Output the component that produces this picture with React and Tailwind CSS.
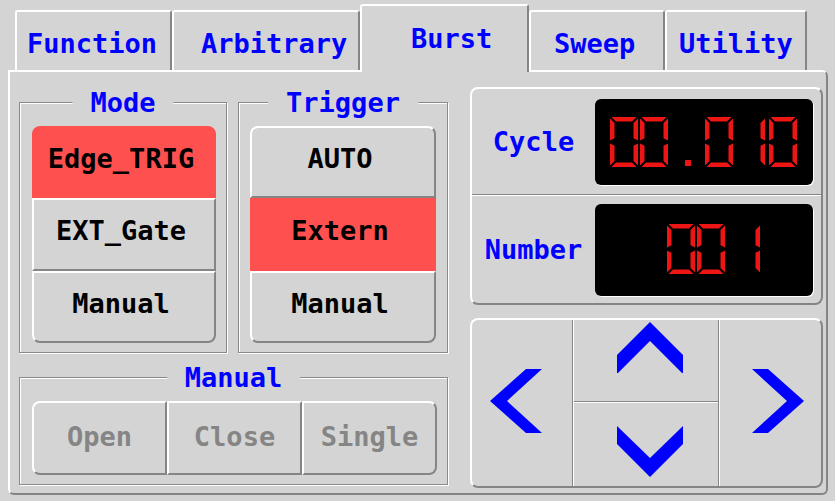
import React from "react";

const FONT = "font-['DejaVu_Sans_Mono',monospace] font-bold";
const RAISED =
  "border-2 border-t-white border-l-white border-r-[#858585] border-b-[#858585]";

const tabs = [
  { label: "Function", cls: "w-[157px] pl-[10px]" },
  { label: "Arbitrary", cls: "w-[188px] pl-[27px]" },
  { label: "Burst", cls: "w-[169px] pl-[49px]", active: true },
  { label: "Sweep", cls: "w-[136px] pl-[23px]" },
  { label: "Utility", cls: "w-[142px] pl-[12px]" },
];

const SEG_RED = "#ee1515";

// simple 7-segment digit, drawn as polygons
function segPolys(x, y, w = 28, h = 50, t = 4.5) {
  const m = h / 2;
  const g = 1.5;
  return {
    a: [[x + g, y], [x + w - g, y], [x + w - g - t, y + t], [x + g + t, y + t]],
    d: [[x + g, y + h], [x + w - g, y + h], [x + w - g - t, y + h - t], [x + g + t, y + h - t]],
    f: [[x, y + g], [x + t, y + g + t], [x + t, y + m - g - t / 2], [x, y + m - g]],
    e: [[x, y + m + g], [x + t, y + m + g + t / 2], [x + t, y + h - g - t], [x, y + h - g]],
    b: [[x + w, y + g], [x + w - t, y + g + t], [x + w - t, y + m - g - t / 2], [x + w, y + m - g]],
    c: [[x + w, y + m + g], [x + w - t, y + m + g + t / 2], [x + w - t, y + h - g - t], [x + w, y + h - g]],
  };
}

const DIGIT_SEGS = { 0: "abcdef", 1: "bc" };

function Digit({ x, y, d }) {
  const polys = segPolys(x, y);
  return (
    <>
      {DIGIT_SEGS[d].split("").map((s) => (
        <polygon key={s} points={polys[s].map((p) => p.join(",")).join(" ")} fill={SEG_RED} />
      ))}
    </>
  );
}

function GroupBox({ title, className, children }) {
  return (
    <div
      className={`relative border border-[#8a8a8a] shadow-[inset_1px_1px_0_#fff,1px_1px_0_#fff] ${className}`}
    >
      <div className="absolute left-1/2 top-[-14px] -translate-x-1/2 bg-[#d4d4d4] px-[18px] text-[27px] leading-none text-[#0000ff] whitespace-nowrap">
        {title}
      </div>
      {children}
    </div>
  );
}

function VButtons({ items, selected }) {
  return (
    <div className="flex h-full flex-col">
      {items.map((it, i) => {
        const sel = i === selected;
        const round = i === 0 ? "rounded-t-[8px]" : i === items.length - 1 ? "rounded-b-[8px]" : "";
        return (
          <div
            key={it}
            className={`flex flex-1 items-center justify-center pb-[7px] pr-[6px] text-[27px] leading-none text-black ${round} ${
              sel ? "border-2 border-[#ff5050] bg-[#ff5050]" : RAISED
            }`}
          >
            {it}
          </div>
        );
      })}
    </div>
  );
}

export default function App() {
  return (
    <div className={`h-[501px] w-[835px] overflow-hidden bg-[#d4d4d4] pt-[4px] ${FONT}`}>
      {/* tabs */}
      <div className="relative z-10 -mb-[2px] ml-[15px] flex h-[68px] items-end">
        {tabs.map((t) => (
          <div
            key={t.label}
            className={`flex items-center border-t-2 border-l-2 border-r-2 border-t-white border-l-white border-r-[#858585] bg-[#d4d4d4] text-[27px] leading-none text-[#0000ff] rounded-t-[3px] ${t.cls} ${
              t.active ? "h-[68px] pb-[2px]" : "mb-[2px] h-[60px] pt-[5px]"
            }`}
          >
            {t.label}
          </div>
        ))}
      </div>

      {/* panel */}
      <div className={`mx-[8px] flex h-[425px] w-[820px] rounded-[6px] rounded-tl-none ${RAISED}`}>
        {/* left column */}
        <div className="ml-[9px] mt-[30px] flex w-[429px] flex-col">
          <div className="flex h-[251px] gap-[11px]">
            <GroupBox title="Mode" className="w-[208px] pb-[9px] pl-[12px] pr-[10px] pt-[23px]">
              <VButtons items={["Edge_TRIG", "EXT_Gate", "Manual"]} selected={0} />
            </GroupBox>
            <GroupBox title="Trigger" className="w-[210px] pb-[9px] pl-[11px] pr-[11px] pt-[23px]">
              <VButtons items={["AUTO", "Extern", "Manual"]} selected={1} />
            </GroupBox>
          </div>
          <GroupBox title="Manual" className="mt-[24px] h-[108px] pb-[9px] pl-[12px] pr-[10px] pt-[23px]">
            <div className="flex h-full">
              {["Open", "Close", "Single"].map((b, i) => (
                <div
                  key={b}
                  className={`flex flex-1 items-center justify-center pb-[3px] text-[27px] leading-none text-[#858585] ${RAISED} ${
                    i === 0 ? "rounded-l-[8px]" : i === 2 ? "rounded-r-[8px]" : ""
                  }`}
                >
                  {b}
                </div>
              ))}
            </div>
          </GroupBox>
        </div>

        {/* right column */}
        <div className="ml-[22px] mt-[15px] flex w-[353px] flex-col">
          <div className={`flex h-[218px] flex-col rounded-[8px] ${RAISED}`}>
            <div className="flex h-[106px] items-center border-b border-[#858585]">
              <div className="w-[123px] text-center text-[27px] leading-none text-[#0000ff]">Cycle</div>
              <div className="h-[86px] w-[218px] rounded-[6px] bg-black shadow-[1px_1px_0_#fff]">
                <svg width="218" height="86" viewBox="0 0 218 86">
                  <Digit x={15} y={18} d={0} />
                  <Digit x={45} y={18} d={0} />
                  <rect x={90} y={61} width={6} height={6} fill={SEG_RED} />
                  <Digit x={110} y={18} d={0} />
                  <Digit x={142} y={18} d={1} />
                  <Digit x={174} y={18} d={0} />
                </svg>
              </div>
            </div>
            <div className="flex flex-1 items-center border-t border-white">
              <div className="w-[123px] text-center text-[27px] leading-none text-[#0000ff]">Number</div>
              <div className="h-[92px] w-[218px] rounded-[6px] bg-black shadow-[1px_1px_0_#fff]">
                <svg width="218" height="92" viewBox="0 0 218 92">
                  <Digit x={72} y={20} d={0} />
                  <Digit x={102} y={20} d={0} />
                  <Digit x={137} y={20} d={1} />
                </svg>
              </div>
            </div>
          </div>

          {/* arrow pad */}
          <div className={`mt-[13px] flex h-[170px] rounded-[8px] ${RAISED}`}>
            <div className="flex w-[101px] items-center justify-center border-r border-[#858585] pb-[4px] pr-[12px]">
              <svg width="52" height="64" viewBox="0 0 52 64">
                <polygon points="0,32 36,0 52,0 17,32 52,64 36,64" fill="#0000ff" />
              </svg>
            </div>
            <div className="flex w-[146px] flex-col border-l border-r border-l-white border-r-[#858585]">
              <div className="flex h-[82px] justify-center border-b border-[#858585] pl-[8px] pt-[2px]">
                <svg width="66" height="51" viewBox="0 0 66 51">
                  <polygon points="33,0 66,33 66,52 33,19 0,52 0,33" fill="#0000ff" />
                </svg>
              </div>
              <div className="flex flex-1 justify-center border-t border-white pl-[8px] pt-[23px]">
                <svg width="66" height="51" viewBox="0 0 66 51">
                  <polygon points="0,0 33,32 66,0 66,18 33,51 0,18" fill="#0000ff" />
                </svg>
              </div>
            </div>
            <div className="flex flex-1 items-center justify-center border-l border-white pb-[4px] pl-[14px]">
              <svg width="52" height="64" viewBox="0 0 52 64">
                <polygon points="0,0 16,0 52,32 16,64 0,64 35,32" fill="#0000ff" />
              </svg>
            </div>
          </div>
        </div>
      </div>
    </div>
  );
}
